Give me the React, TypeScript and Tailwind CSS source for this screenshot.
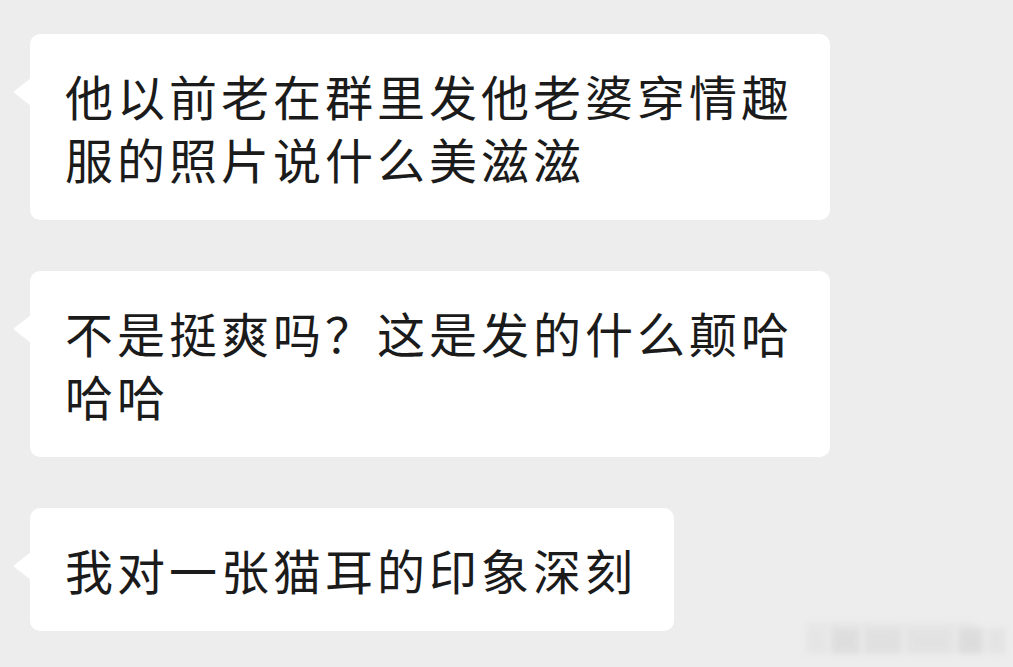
const messages = [
  '他以前老在群里发他老婆穿情趣服的照片说什么美滋滋',
  '不是挺爽吗？这是发的什么颠哈哈哈',
  '我对一张猫耳的印象深刻',
];

function Bubble({ text }: { text: string }) {
  return (
    <div className="relative max-w-[800px] rounded-[10px] bg-white pl-[35px] pr-[37px] py-[30px]">
      <svg
        className="absolute left-[-17px] top-[44px]"
        width="18"
        height="28"
        viewBox="0 0 18 28"
      >
        <path d="M18 0 L2 12.5 Q0 14 2 15.5 L18 28 Z" fill="#ffffff" />
      </svg>
      <p className="text-[48px] leading-[63px] tracking-[4px] text-[#1b1b1b]">{text}</p>
    </div>
  );
}

export default function App() {
  return (
    <div
      className="relative h-[667px] w-[1013px] overflow-hidden bg-[#ededed]"
      style={{ fontFamily: '"Noto Sans CJK SC", "Noto Sans", sans-serif' }}
    >
      <div className="flex flex-col items-start gap-[51px] pl-[30px] pt-[34px]">
        {messages.map((m, i) => (
          <Bubble key={i} text={m} />
        ))}
      </div>

      {/* blurred watermark */}
      <div className="absolute left-[806px] top-[623px] flex h-[38px] w-[200px] flex-col gap-[2px] blur-[3px] opacity-50">
        <div className="h-[3px] w-[170px] bg-[#d8d8d8]" />
        <div className="flex h-[26px] gap-[4px]">
          <div className="h-full w-[22px] bg-[#dedede]" />
          <div className="h-full w-[30px] bg-[#cfcfcf]" />
          <div className="h-full w-[40px] bg-[#d4d4d4]" />
          <div className="h-full w-[50px] bg-[#d9d9d9]" />
          <div className="h-full w-[26px] bg-[#cdcdcd]" />
          <div className="h-full w-[20px] bg-[#dcdcdc]" />
        </div>
      </div>
    </div>
  );
}
